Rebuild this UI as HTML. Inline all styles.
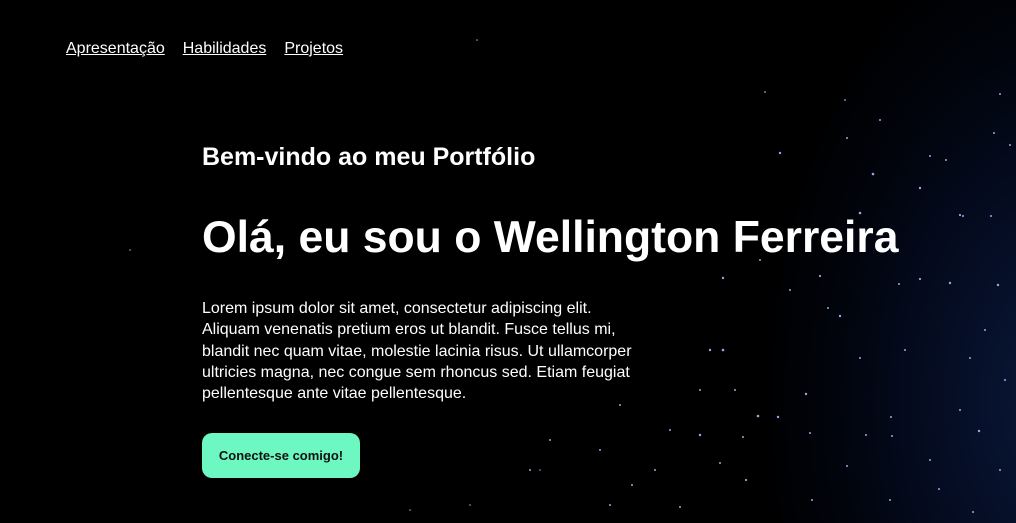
<!DOCTYPE html>
<html><head><meta charset="utf-8"><style>
html,body{margin:0;width:1016px;height:523px;overflow:hidden;background:#000;}
body{position:relative;font-family:"Liberation Sans",sans-serif;color:#fff;
background:radial-gradient(ellipse 300px 480px at 1060px 400px,#0a1838 0%,#050d24 40%,#01040c 75%,#000 100%);}
svg.st{position:absolute;left:0;top:0}
nav{position:absolute;left:66px;top:40px;font-size:16px}
nav a{color:#fff;text-decoration:underline;margin-right:18px}
.h2{position:absolute;left:202px;top:143px;font-size:25px;font-weight:bold;letter-spacing:0px}
.h1{position:absolute;left:202px;top:213px;font-size:44.5px;font-weight:bold;letter-spacing:0px;white-space:nowrap}
p{position:absolute;left:202px;top:298px;margin:0;font-size:16px;line-height:21.3px;letter-spacing:0px;white-space:nowrap}
.btn{position:absolute;left:202px;top:433px;width:158px;height:45px;border-radius:10px;background:#6df7c1;color:#111;font-size:13px;font-weight:bold;display:flex;align-items:center;justify-content:center}
</style></head><body>
<svg class="st" width="1016" height="523" fill="#aab8ff">
<g opacity=".9">
<circle cx="780" cy="153" r="1.2"/><circle cx="847" cy="138" r="1"/><circle cx="873" cy="174" r="1.3"/><circle cx="920" cy="188" r="1.2"/><circle cx="960" cy="215" r="1.1"/><circle cx="963" cy="216" r="1"/><circle cx="991" cy="216" r="1"/><circle cx="860" cy="213" r="1.3"/><circle cx="1000" cy="94" r="1"/><circle cx="994" cy="133" r="1"/><circle cx="930" cy="156" r="1"/><circle cx="820" cy="276" r="1.1"/><circle cx="920" cy="279" r="1.1"/><circle cx="950" cy="283" r="1.2"/><circle cx="998" cy="285" r="1.2"/><circle cx="899" cy="284" r="1"/><circle cx="723" cy="278" r="1.2"/><circle cx="828" cy="308" r="1"/><circle cx="840" cy="316" r="1.2"/><circle cx="710" cy="350" r="1.2"/><circle cx="723" cy="350" r="1.3"/><circle cx="860" cy="358" r="1"/><circle cx="905" cy="350" r="1"/><circle cx="970" cy="358" r="1"/><circle cx="806" cy="394" r="1.2"/><circle cx="758" cy="416" r="1.3"/><circle cx="778" cy="417" r="1.2"/><circle cx="743" cy="437" r="1"/><circle cx="700" cy="435" r="1.2"/><circle cx="810" cy="433" r="1"/><circle cx="866" cy="435" r="1"/><circle cx="891" cy="417" r="1"/><circle cx="979" cy="431" r="1.2"/><circle cx="746" cy="480" r="1.1"/><circle cx="720" cy="463" r="1"/><circle cx="847" cy="466" r="1"/><circle cx="939" cy="489" r="1"/><circle cx="973" cy="512" r="1"/><circle cx="812" cy="500" r="1"/><circle cx="892" cy="436" r="1"/><circle cx="670" cy="430" r="1"/><circle cx="655" cy="470" r="1"/><circle cx="610" cy="505" r="1"/><circle cx="600" cy="450" r="1"/><circle cx="632" cy="485" r="1"/><circle cx="550" cy="440" r="1"/><circle cx="530" cy="470" r="1"/><circle cx="620" cy="405" r="1"/><circle cx="880" cy="120" r="1"/><circle cx="946" cy="160" r="1"/><circle cx="1010" cy="145" r="1"/><circle cx="765" cy="92" r="0.9"/><circle cx="845" cy="100" r="0.9"/><circle cx="985" cy="330" r="1"/><circle cx="1005" cy="380" r="1"/><circle cx="960" cy="410" r="1"/><circle cx="930" cy="460" r="1"/><circle cx="890" cy="500" r="1"/><circle cx="760" cy="260" r="1"/><circle cx="790" cy="290" r="1"/><circle cx="735" cy="390" r="1"/><circle cx="700" cy="390" r="1"/><circle cx="680" cy="507" r="1"/><circle cx="1000" cy="470" r="1"/><circle cx="477" cy="40" r="0.8"/><circle cx="130" cy="250" r="0.8"/><circle cx="540" cy="470" r="0.8"/><circle cx="470" cy="505" r="0.8"/><circle cx="410" cy="510" r="0.8"/>
</g></svg>
<nav><a>Apresentação</a><a>Habilidades</a><a>Projetos</a></nav>
<div class="h2">Bem-vindo ao meu Portfólio</div>
<div class="h1">Olá, eu sou o Wellington Ferreira</div>
<p>Lorem ipsum dolor sit amet, consectetur adipiscing elit.<br>Aliquam venenatis pretium eros ut blandit. Fusce tellus mi,<br>blandit nec quam vitae, molestie lacinia risus. Ut ullamcorper<br>ultricies magna, nec congue sem rhoncus sed. Etiam feugiat<br>pellentesque ante vitae pellentesque.</p>
<div class="btn">Conecte-se comigo!</div>
</body></html>
